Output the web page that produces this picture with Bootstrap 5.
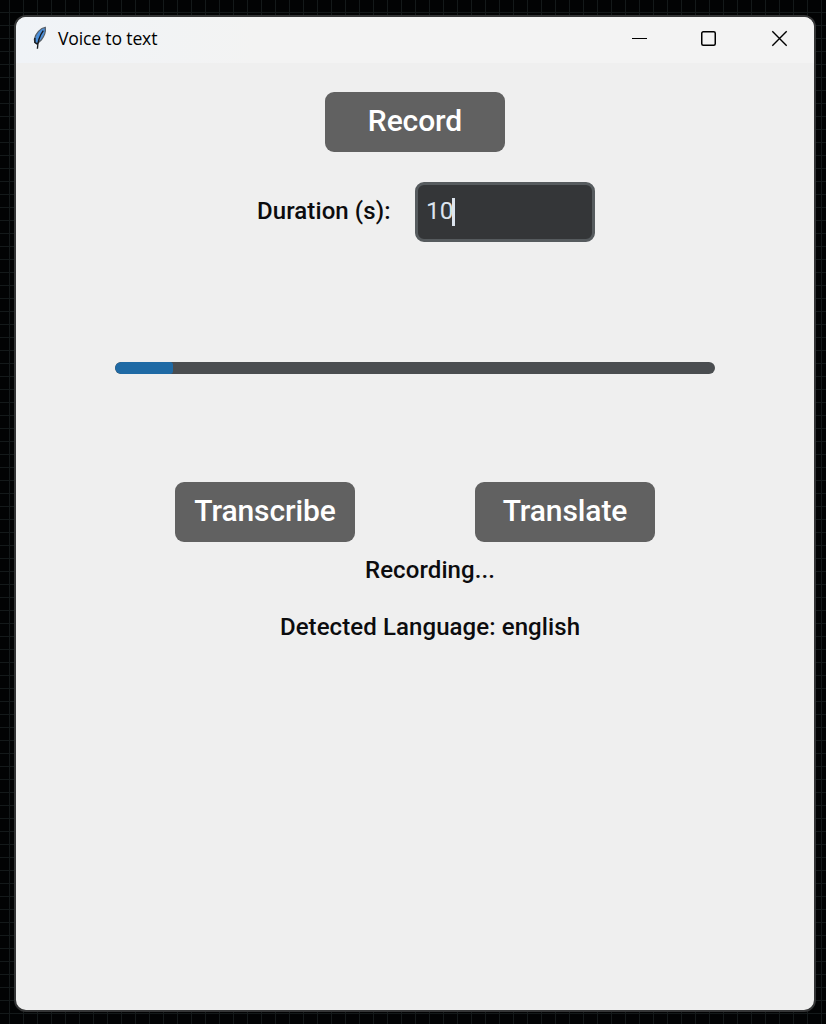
<!DOCTYPE html>
<html lang="en">
<head>
<meta charset="utf-8">
<meta name="viewport" content="width=device-width, initial-scale=1">
<title>Voice to text</title>
<link href="https://cdn.jsdelivr.net/npm/bootstrap@5.3.0/dist/css/bootstrap.min.css" rel="stylesheet">
<style>
  body {
    height: 1024px;
    padding: 15px 10px 12px 14px;
    font-family: Roboto, "Liberation Sans", sans-serif;
    background-color: #020304;
    background-image:
      repeating-linear-gradient(90deg, transparent 0 9px, #14191a 9px 10px, transparent 10px 14px),
      repeating-linear-gradient(180deg, transparent 0 12px, #14191a 12px 13px);
  }
  .app-window { border: 2px solid #343536; border-radius: 12px; background: #efefef; color: #0c0c0e; }
  .title-bar { height: 46px; padding: 0 26px 4px 16px; background: linear-gradient(90deg, #f0f3f7, #f3f3f3 30%); color: #000; }
  .title-text { font: 17.6px/24px "Open Sans", "Noto Sans", sans-serif; letter-spacing: -.17px; margin-left: 10px; }
  .caption-icons { gap: 53px; }
  .tk-btn { --bs-btn-color: #fff; --bs-btn-bg: #616161; --bs-btn-hover-color: #fff; --bs-btn-hover-bg: #4a4a4a;
    width: 180px; height: 60px; padding: 0 0 3px; border: 0; border-radius: 9px; font-size: 30px; font-weight: 500; line-height: 1; letter-spacing: -.1px; }
  .tk-label { font-size: 24px; font-weight: 500; line-height: 28px; letter-spacing: .09px; white-space: nowrap; }
  .entry { width: 180px; height: 60px; border: 3px solid #565b5e; border-radius: 9px; background: #343638; color: #dce4ee; font-size: 24.5px; padding: 0 0 1px 8px; }
  .caret { width: 3px; height: 28px; background: #dce4ee; margin-left: -2px; }
  .record-row { padding-top: 29px; }
  .duration-row { margin-top: 30px; padding-left: 241px; }
  .duration-row .tk-label { width: 158px; padding-bottom: 2px; }
  .meter { width: 600px; height: 12px; margin: 120px auto 0 99px; border-radius: 6px; background: #4a4d50; }
  .meter .progress-bar { background: #1f6aa5; border-radius: 6px 3px 3px 6px; }
  .action-row { margin-top: 108px; padding-left: 159px; gap: 120px; }
  .status-area { padding: 14px 0 0 30px; gap: 29px; }
</style>
</head>
<body class="d-flex overflow-hidden">
<div class="app-window flex-grow-1 overflow-hidden d-flex flex-column">
  <header class="title-bar d-flex align-items-center justify-content-between">
    <div class="d-flex align-items-center">
      <svg width="16" height="24" viewBox="0 0 16 24" aria-hidden="true">
        <path d="M13.3 1.4C8.8 1.8 3.2 7.5 2.4 13.4l.4 3 2.4 1.4L9.2 14c3.2-3.8 4.6-8.8 4.1-12.6Z" fill="#4a8fdb" stroke="#59616a" stroke-width="1.3"/>
        <path d="M11.3 4.6C8 9 5.8 14 5.4 22.8M2.9 12v4.5l2.4 1.6" fill="none" stroke="#15191f" stroke-width="1.4"/>
      </svg>
      <span class="title-text">Voice to text</span>
    </div>
    <div class="caption-icons d-flex align-items-center">
      <svg width="17" height="17" viewBox="0 0 17 17"><path d="M1 8.5h15" stroke="#000"/></svg>
      <svg width="17" height="17" viewBox="0 0 17 17"><rect x=".75" y="1.75" width="13.5" height="13.5" rx="1.5" fill="none" stroke="#000" stroke-width="1.5"/></svg>
      <svg width="17" height="17" viewBox="0 0 17 17"><path d="m1.3 1.3 14.4 14.4M15.7 1.3 1.3 15.7" stroke="#000" stroke-width="1.4"/></svg>
    </div>
  </header>
  <main>
    <div class="record-row d-flex justify-content-center"><button class="btn tk-btn" type="button">Record</button></div>
    <div class="duration-row d-flex align-items-center">
      <span class="tk-label">Duration (s):</span>
      <div class="entry d-flex align-items-center"><span>10</span><span class="caret"></span></div>
    </div>
    <div class="progress meter" role="progressbar" aria-valuenow="10" aria-valuemin="0" aria-valuemax="100">
      <div class="progress-bar" style="width: 9.7%"></div>
    </div>
    <div class="action-row d-flex">
      <button class="btn tk-btn" type="button">Transcribe</button>
      <button class="btn tk-btn" type="button">Translate</button>
    </div>
    <div class="status-area d-flex flex-column align-items-center">
      <span class="tk-label">Recording...</span>
      <span class="tk-label">Detected Language: english</span>
    </div>
  </main>
</div>
<script src="https://cdn.jsdelivr.net/npm/bootstrap@5.3.0/dist/js/bootstrap.bundle.min.js"></script>
</body>
</html>
